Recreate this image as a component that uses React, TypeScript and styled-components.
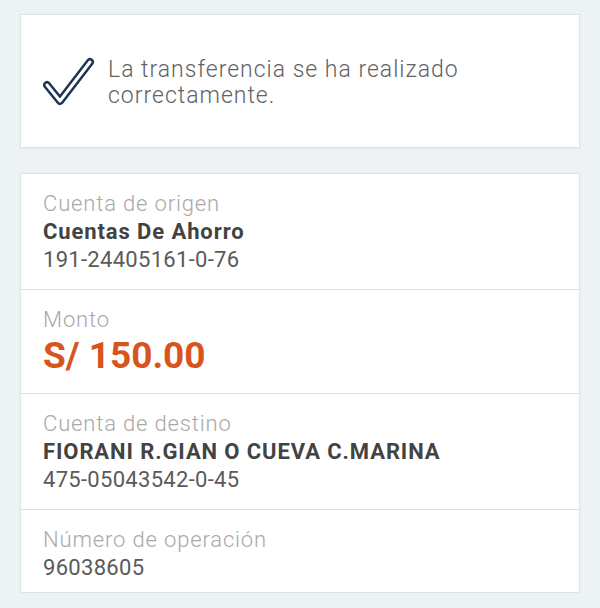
import styled, { createGlobalStyle } from 'styled-components';

const GlobalStyle = createGlobalStyle`
  html, body {
    margin: 0;
    padding: 0;
    background: #edf2f5;
  }
  body {
    font-family: Roboto, "Liberation Sans", sans-serif;
  }
`;

const Page = styled.div`
  padding: 14px 20px 0;
  display: flex;
  flex-direction: column;
  gap: 25px;
`;

const Card = styled.div`
  background: #fff;
  border: 1px solid #dde3e7;
  box-shadow: 0 1px 2px rgba(0, 0, 0, 0.04);
`;

const SuccessCard = styled(Card)`
  height: 132px;
  display: flex;
  align-items: center;
  gap: 13px;
  padding: 0 22px;
`;

const SuccessText = styled.p`
  margin: 3px 0 0;
  font-size: 23px;
  font-weight: 300;
  line-height: 26px;
  letter-spacing: 1px;
  color: #626262;
  max-width: 400px;
`;

interface RowProps {
  compact?: boolean;
}

const Row = styled.div<RowProps>`
  padding: ${(p) => (p.compact ? '16px 22px 10px' : '16px 22px 15px')};
  & + & {
    border-top: 1px solid #dadfe2;
  }
`;

const Label = styled.div`
  font-size: 22px;
  font-weight: 300;
  line-height: 28px;
  letter-spacing: 0.85px;
  color: #a9a9a9;
`;

const Holder = styled.div`
  font-size: 22px;
  font-weight: 700;
  line-height: 28px;
  letter-spacing: 0.9px;
  color: #434343;
`;

const Number = styled.div`
  font-size: 22px;
  font-weight: 400;
  line-height: 28px;
  letter-spacing: 0.3px;
  color: #5a5a5a;
`;

const Amount = styled.div`
  font-size: 37px;
  font-weight: 700;
  line-height: 44px;
  color: #d8541d;
`;

const CheckIcon = () => (
  <svg width="52" height="50" viewBox="0 0 52 50" fill="none">
    <path
      d="M4 29 L17 45 L47 6"
      stroke="#1d3553"
      strokeWidth="8"
      strokeLinecap="round"
      strokeLinejoin="round"
    />
    <path
      d="M4 29 L17 45 L47 6"
      stroke="#fff"
      strokeWidth="3"
      strokeLinecap="round"
      strokeLinejoin="round"
    />
  </svg>
);

export default function App() {
  return (
    <>
      <GlobalStyle />
      <Page>
        <SuccessCard>
          <CheckIcon />
          <SuccessText>La transferencia se ha realizado correctamente.</SuccessText>
        </SuccessCard>

        <Card>
          <Row>
            <Label>Cuenta de origen</Label>
            <Holder>Cuentas De Ahorro</Holder>
            <Number>191-24405161-0-76</Number>
          </Row>
          <Row>
            <Label>Monto</Label>
            <Amount>S/ 150.00</Amount>
          </Row>
          <Row>
            <Label>Cuenta de destino</Label>
            <Holder>FIORANI R.GIAN O CUEVA C.MARINA</Holder>
            <Number>475-05043542-0-45</Number>
          </Row>
          <Row compact>
            <Label>Número de operación</Label>
            <Number>96038605</Number>
          </Row>
        </Card>
      </Page>
    </>
  );
}
